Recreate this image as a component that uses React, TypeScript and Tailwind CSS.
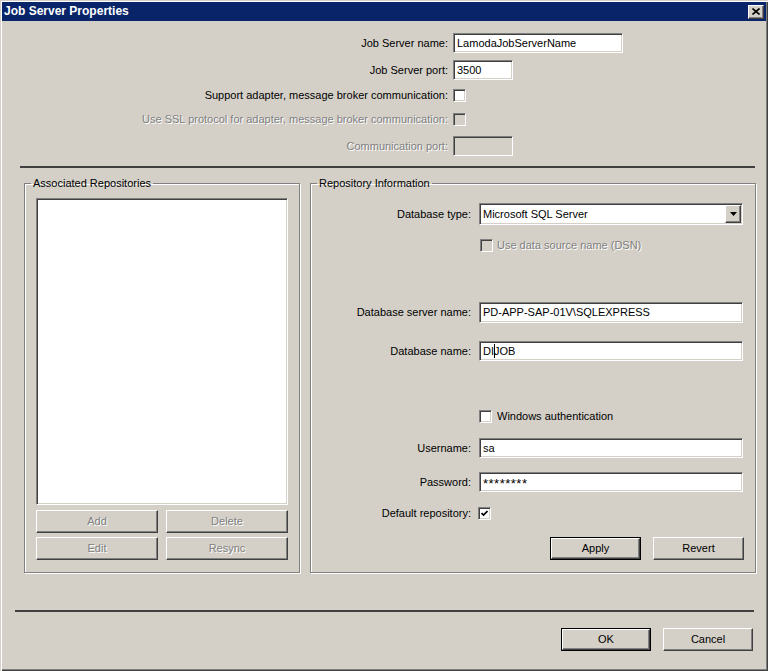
import React from 'react';

const sunken =
  'border border-t-[#808080] border-l-[#808080] border-b-white border-r-white shadow-[inset_1px_1px_0_#404040,inset_-1px_-1px_0_#d4d0c8]';
const raised =
  'border border-t-white border-l-white border-b-[#404040] border-r-[#404040] shadow-[inset_-1px_-1px_0_#808080] bg-[#d4d0c8]';
const disabledText = 'text-[#808080] [text-shadow:1px_1px_0_#fff]';

function Field({ value, className = '', disabled = false, children }: { value?: string; className?: string; disabled?: boolean; children?: React.ReactNode }) {
  return (
    <div className={`${sunken} ${disabled ? 'bg-[#d4d0c8]' : 'bg-white'} flex items-center pl-[3px] whitespace-nowrap overflow-hidden ${className}`}>
      {children ?? value}
    </div>
  );
}

function Check({ checked = false, disabled = false }: { checked?: boolean; disabled?: boolean }) {
  return (
    <div className={`${sunken} ${disabled ? 'bg-[#d4d0c8]' : 'bg-white'} w-[13px] h-[13px] shrink-0 flex items-center justify-center`}>
      {checked && (
        <svg width="7" height="7" viewBox="0 0 7 7">
          <path d="M0.5 3 L2.5 5 L6.5 1" fill="none" stroke="#000" strokeWidth="1.7" />
        </svg>
      )}
    </div>
  );
}

function Btn({ label, className = '', disabled = false, isDefault = false }: { label: string; className?: string; disabled?: boolean; isDefault?: boolean }) {
  const inner = (
    <div className={`${raised} h-full w-full flex items-center justify-center ${disabled ? disabledText : 'text-black'}`}>
      {label}
    </div>
  );
  if (isDefault) {
    return <div className={`border border-black ${className}`}>{inner}</div>;
  }
  return <div className={className}>{inner}</div>;
}

function TopRow({ label, disabled = false, className = '', children }: { label: string; disabled?: boolean; className?: string; children: React.ReactNode }) {
  return (
    <div className={`flex items-center ${className}`}>
      <div className={`w-[451px] text-right pr-[5px] ${disabled ? disabledText : ''}`}>{label}</div>
      {children}
    </div>
  );
}

function RepoRow({ label, className = '', children }: { label?: string; className?: string; children: React.ReactNode }) {
  return (
    <div className={`flex items-center ${className}`}>
      <div className="w-[160px] text-right">{label}</div>
      <div className="ml-[8px] flex items-center">{children}</div>
    </div>
  );
}

export default function App() {
  return (
    <div className="w-[768px] h-[671px] bg-[#d4d0c8] p-[2px] shadow-[inset_1px_1px_0_#d4d0c8,inset_2px_2px_0_#fff,inset_-1px_-1px_0_#404040,inset_-2px_-2px_0_#808080] font-['Liberation_Sans',Arial,sans-serif] text-[11px] leading-[13px] text-black overflow-hidden">
      <div className="h-[19px] bg-[#0a246a] flex items-center justify-between pl-[2px] pr-[2px]">
        <span className="text-white font-bold text-[12px]">Job Server Properties</span>
        <div className={`${raised} w-[16px] h-[14px] flex items-center justify-center`}>
          <svg width="8" height="7" viewBox="0 0 8 7">
            <path d="M0.5 0.5 L7.5 6.5 M7.5 0.5 L0.5 6.5" stroke="#000" strokeWidth="1.6" />
          </svg>
        </div>
      </div>

      <div className="pt-[12px]">
        <TopRow label="Job Server name:" className="h-[20px]">
          <Field value="LamodaJobServerName" className="w-[170px] h-[20px]" />
        </TopRow>
        <TopRow label="Job Server port:" className="h-[20px] mt-[7px]">
          <Field value="3500" className="w-[60px] h-[20px]" />
        </TopRow>
        <TopRow label="Support adapter, message broker communication:" className="h-[20px] mt-[5px]">
          <Check />
        </TopRow>
        <TopRow label="Use SSL protocol for adapter, message broker communication:" disabled className="h-[20px] mt-[4px]">
          <Check disabled />
        </TopRow>
        <TopRow label="Communication port:" disabled className="h-[20px] mt-[7px]">
          <Field disabled className="w-[60px] h-[20px]" />
        </TopRow>
      </div>

      <div className="h-[2px] bg-[#404040] mt-[10px] ml-[18px] mr-[11px]" />

      <div className="flex mt-[9px] ml-[22px] gap-[10px]">
        <fieldset className="w-[275px] h-[396px] border border-[#808080] shadow-[1px_1px_0_#fff,inset_1px_1px_0_#fff]">
          <legend className="ml-[6px] px-[2px] leading-[13px]">Associated Repositories</legend>
          <div className="px-[11px]">
            <div className={`${sunken} bg-white w-[252px] h-[307px] mt-[8px]`} />
            <div className="flex gap-[8px] mt-[5px]">
              <Btn label="Add" disabled className="w-[122px] h-[23px]" />
              <Btn label="Delete" disabled className="w-[122px] h-[23px]" />
            </div>
            <div className="flex gap-[8px] mt-[4px]">
              <Btn label="Edit" disabled className="w-[122px] h-[23px]" />
              <Btn label="Resync" disabled className="w-[122px] h-[23px]" />
            </div>
          </div>
        </fieldset>

        <fieldset className="w-[446px] h-[396px] border border-[#808080] shadow-[1px_1px_0_#fff,inset_1px_1px_0_#fff]">
          <legend className="ml-[6px] px-[2px] leading-[13px]">Repository Information</legend>
          <RepoRow label="Database type:" className="mt-[13px] h-[22px]">
            <div className={`${sunken} bg-white w-[264px] h-[22px] flex items-center justify-between pl-[3px] pr-[1px]`}>
              <span>Microsoft SQL Server</span>
              <div className={`${raised} w-[16px] h-[18px] flex items-center justify-center`}>
                <svg width="7" height="4" viewBox="0 0 7 4">
                  <path d="M0 0 H7 L3.5 4 Z" fill="#000" />
                </svg>
              </div>
            </div>
          </RepoRow>
          <RepoRow className="mt-[14px] h-[13px]">
            <div className="ml-[1px]"><Check disabled /></div>
            <span className={`ml-[4px] ${disabledText}`}>Use data source name (DSN)</span>
          </RepoRow>
          <RepoRow label="Database server name:" className="mt-[50px] h-[21px]">
            <Field value="PD-APP-SAP-01V\SQLEXPRESS" className="w-[264px] h-[21px]" />
          </RepoRow>
          <RepoRow label="Database name:" className="mt-[18px] h-[20px]">
            <Field className="w-[264px] h-[20px]">
              DI<span className="inline-block w-px h-[14px] bg-black -mr-px" />JOB
            </Field>
          </RepoRow>
          <RepoRow className="mt-[49px] h-[13px]">
            <Check />
            <span className="ml-[5px]">Windows authentication</span>
          </RepoRow>
          <RepoRow label="Username:" className="mt-[15px] h-[20px]">
            <Field value="sa" className="w-[264px] h-[20px]" />
          </RepoRow>
          <RepoRow label="Password:" className="mt-[14px] h-[20px]">
            <Field className="w-[264px] h-[20px]">
              <span className="text-[13px] tracking-[0.5px] pt-[3px]">********</span>
            </Field>
          </RepoRow>
          <RepoRow label="Default repository:" className="mt-[15px] h-[13px]">
            <div className="-ml-[1px]"><Check checked /></div>
          </RepoRow>
          <div className="flex justify-end gap-[12px] mt-[17px] pr-[11px]">
            <Btn label="Apply" isDefault className="w-[91px] h-[23px]" />
            <Btn label="Revert" className="w-[91px] h-[23px]" />
          </div>
        </fieldset>
      </div>

      <div className="h-[2px] bg-[#404040] mt-[37px] ml-[13px] mr-[12px]" />

      <div className="flex justify-end gap-[12px] mt-[16px] mr-[13px]">
        <Btn label="OK" isDefault className="w-[90px] h-[23px]" />
        <Btn label="Cancel" className="w-[90px] h-[23px]" />
      </div>
    </div>
  );
}
